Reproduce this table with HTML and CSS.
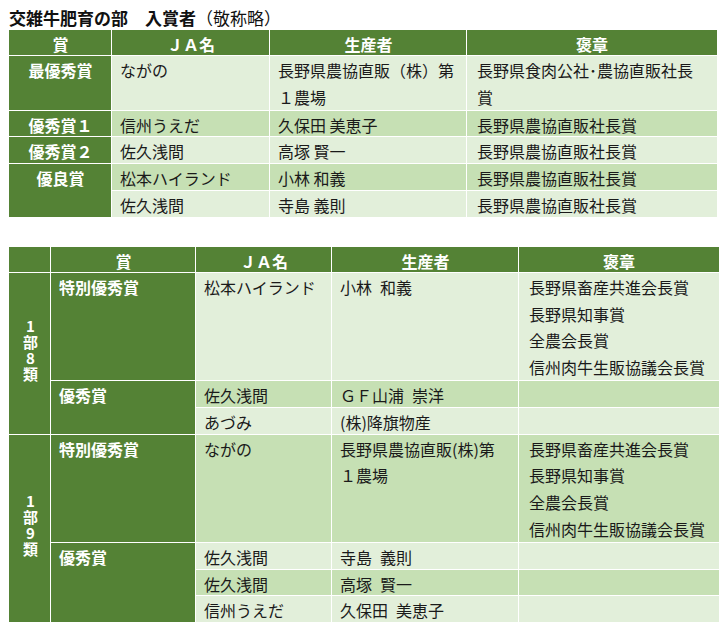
FILE: index.html
```html
<!DOCTYPE html>
<html lang="ja">
<head>
<meta charset="utf-8">
<title>交雑牛肥育の部 入賞者</title>
<link rel="stylesheet" href="styles.css">
</head>
<body>
<h1 class="title">交雑牛肥育の部　入賞者<span class="note">（敬称略）</span></h1>

<table class="awards awards-1">
  <colgroup>
    <col class="c-prize1"><col class="c-ja1"><col class="c-name1"><col class="c-medal1">
  </colgroup>
  <thead>
    <tr><th>賞</th><th>ＪＡ名</th><th>生産者</th><th>褒章</th></tr>
  </thead>
  <tbody>
    <tr class="light">
      <td class="prize center">最優秀賞</td>
      <td>ながの</td>
      <td class="multi">長野県農協直販（株）第<br>１農場</td>
      <td class="multi medal">長野県食肉公社･農協直販社長<br>賞</td>
    </tr>
    <tr class="mid">
      <td class="prize center">優秀賞１</td>
      <td>信州うえだ</td>
      <td>久保田 美恵子</td>
      <td class="medal">長野県農協直販社長賞</td>
    </tr>
    <tr class="light">
      <td class="prize center">優秀賞２</td>
      <td>佐久浅間</td>
      <td>高塚 賢一</td>
      <td class="medal">長野県農協直販社長賞</td>
    </tr>
    <tr class="mid">
      <td class="prize center" rowspan="2">優良賞</td>
      <td>松本ハイランド</td>
      <td>小林 和義</td>
      <td class="medal">長野県農協直販社長賞</td>
    </tr>
    <tr class="light">
      <td>佐久浅間</td>
      <td>寺島 義則</td>
      <td class="medal">長野県農協直販社長賞</td>
    </tr>
  </tbody>
</table>

<table class="awards awards-2">
  <colgroup>
    <col class="c-class2"><col class="c-prize2"><col class="c-ja2"><col class="c-name2"><col class="c-medal2">
  </colgroup>
  <thead>
    <tr><th></th><th>賞</th><th>ＪＡ名</th><th>生産者</th><th>褒章</th></tr>
  </thead>
  <tbody>
    <tr class="light">
      <td class="prize cls" rowspan="3"><span class="vtext">1部8類</span></td>
      <td class="prize">特別優秀賞</td>
      <td>松本ハイランド</td>
      <td>小林&ensp;和義</td>
      <td class="multi medal">長野県畜産共進会長賞<br>長野県知事賞<br>全農会長賞<br>信州肉牛生販協議会長賞</td>
    </tr>
    <tr class="mid">
      <td class="prize" rowspan="2">優秀賞</td>
      <td>佐久浅間</td>
      <td>ＧＦ山浦&ensp;崇洋</td>
      <td class="medal"></td>
    </tr>
    <tr class="light">
      <td>あづみ</td>
      <td>(株)降旗物産</td>
      <td class="medal"></td>
    </tr>
    <tr class="mid">
      <td class="prize cls" rowspan="4"><span class="vtext">1部9類</span></td>
      <td class="prize">特別優秀賞</td>
      <td>ながの</td>
      <td class="multi">長野県農協直販(株)第<br>１農場</td>
      <td class="multi medal">長野県畜産共進会長賞<br>長野県知事賞<br>全農会長賞<br>信州肉牛生販協議会長賞</td>
    </tr>
    <tr class="light">
      <td class="prize" rowspan="3">優秀賞</td>
      <td>佐久浅間</td>
      <td>寺島&ensp;義則</td>
      <td class="medal"></td>
    </tr>
    <tr class="mid">
      <td>佐久浅間</td>
      <td>高塚&ensp;賢一</td>
      <td class="medal"></td>
    </tr>
    <tr class="light">
      <td>信州うえだ</td>
      <td>久保田&ensp;美恵子</td>
      <td class="medal"></td>
    </tr>
  </tbody>
</table>
</body>
</html>
```
FILE: styles.css
```css
html, body {
  margin: 0;
  padding: 0;
  background: #ffffff;
}

body {
  padding-left: 9px;
  font-family: "Noto Sans CJK JP", "Noto Sans", sans-serif;
  color: #1a1a1a;
}

.title {
  margin: 0;
  box-sizing: border-box;
  height: 30px;
  padding-top: 7px;
  font-size: 17px;
  line-height: 22px;
  font-weight: bold;
  color: #111111;
}

.title .note {
  font-weight: normal;
}

.awards {
  border-collapse: collapse;
  border-spacing: 0;
  table-layout: fixed;
  font-size: 16px;
}

.awards-1 {
  width: 708px;
}

.awards-2 {
  width: 710px;
  margin-top: 29px;
}

.c-prize1 { width: 103px; }
.c-ja1 { width: 158px; }
.c-name1 { width: 197px; }
.c-medal1 { width: 250px; }

.c-class2 { width: 42px; }
.c-prize2 { width: 145px; }
.c-ja2 { width: 136px; }
.c-name2 { width: 187px; }
.c-medal2 { width: 200px; }

.awards th,
.awards td {
  padding: 2px 8px 0 8px;
  white-space: nowrap;
  overflow: hidden;
  box-shadow: inset -1px -1px 0 #ffffff;
}

.awards th:last-child,
.awards td:last-child {
  box-shadow: inset 0 -1px 0 #ffffff;
}

.awards th {
  background: #548235;
  color: #ffffff;
  font-weight: bold;
  text-align: center;
  line-height: 24px;
  vertical-align: middle;
}

.awards td {
  line-height: 24.8px;
  vertical-align: top;
  text-align: left;
}

.awards td.multi {
  padding-top: 1px;
  line-height: 26.8px;
}

.awards td.medal {
  padding-left: 10px;
}

.light td {
  background: #e2efda;
}

.mid td {
  background: #c6e0b4;
}

.awards td.prize {
  background: #548235;
  color: #ffffff;
  font-weight: bold;
}

.awards td.center {
  text-align: center;
}

.awards td.cls {
  padding: 0;
  text-align: center;
  vertical-align: middle;
}

.vtext {
  display: inline-block;
  writing-mode: vertical-rl;
  text-orientation: upright;
  font-size: 15px;
  line-height: 20px;
  letter-spacing: 1px;
}
```
